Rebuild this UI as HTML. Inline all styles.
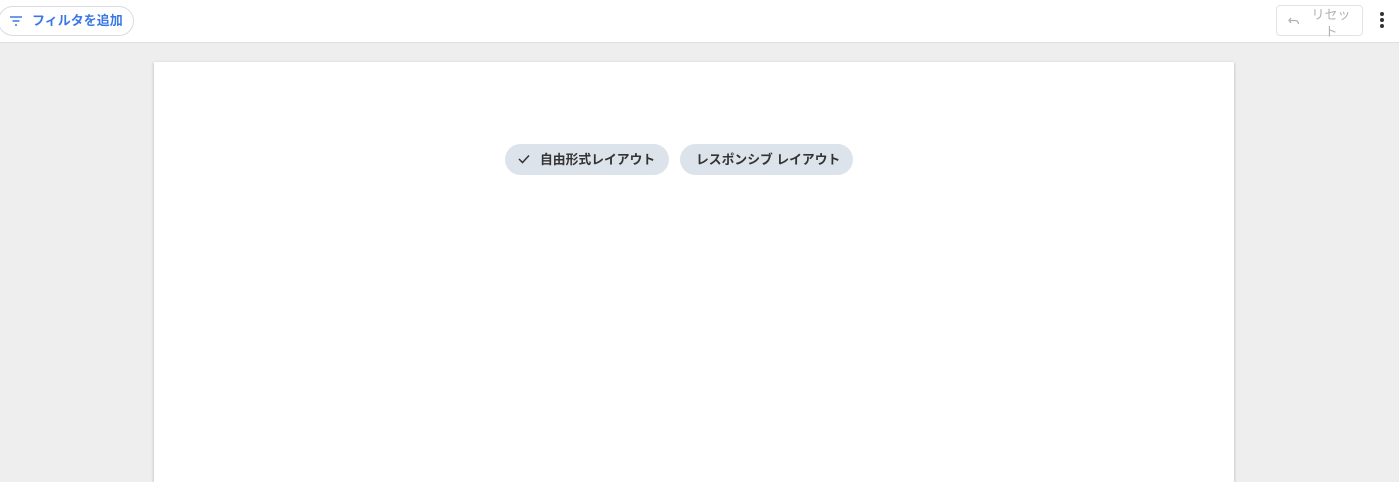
<!DOCTYPE html>
<html><head><meta charset="utf-8"><style>
body{margin:0;width:1399px;height:468px;overflow:hidden;background:#eeeeee;font-family:"Liberation Sans","Noto Sans CJK JP",sans-serif;position:relative}
.top{position:absolute;left:0;top:0;width:1399px;height:42px;background:#fff;border-bottom:1px solid #e0e0e0}
.filter{position:absolute;left:-2px;top:6px;width:136px;height:30px;border:1px solid #dadce0;border-radius:15px;box-sizing:border-box;color:#3b78e7;font-size:13px;font-weight:bold;line-height:28px}
.filter svg{position:absolute;left:10px;top:8px}
.filter span{position:absolute;left:33px;top:0}
.reset{position:absolute;left:1276px;top:5px;width:87px;height:31px;border:1px solid #e3e3e3;border-radius:4px;box-sizing:border-box;color:#b0b0b0;font-size:13px}
.reset .t{position:absolute;left:30px;top:0px;width:48px;line-height:17px;text-align:center}
.reset svg{position:absolute;left:11px;top:10px}
.dots{position:absolute;left:1380px;top:12px}
.dots i{display:block;width:4px;height:4px;border-radius:2px;background:#333;margin-bottom:2px}
.page{position:absolute;left:154px;top:62px;width:1080px;height:420px;background:#fff;box-shadow:0 1px 3px rgba(0,0,0,.25)}
.chip{position:absolute;top:144px;height:31px;border-radius:16px;background:#dde3ea;color:#333;font-size:12.8px;font-weight:bold;line-height:31px;box-sizing:border-box;white-space:nowrap}
</style></head><body>
<div class="top">
<div class="filter"><svg width="14" height="12" viewBox="0 0 14 12"><path d="M1 2h12M3.5 6h7M6 10h2" stroke="#3b78e7" stroke-width="1.6"/></svg><span>フィルタを追加</span></div>
<div class="reset"><svg width="12" height="10" viewBox="0 0 12 10"><path d="M3 2L1 4.5 3 7M1 4.5h6a3.5 3.5 0 0 1 3.5 3.5" stroke="#b0b0b0" stroke-width="1.3" fill="none"/></svg><div class="t">リセット</div></div>
<div class="dots"><i></i><i></i><i></i></div>
</div>
<div class="page"></div>
<div class="chip" style="left:505px;width:164px;padding-left:35px"><svg style="position:absolute;left:13px;top:10px" width="12" height="10" viewBox="0 0 12 10"><path d="M1 5l3.5 3.5L11 1.5" stroke="#333" stroke-width="1.5" fill="none"/></svg>自由形式レイアウト</div>
<div class="chip" style="left:680px;width:173px;padding-left:16px">レスポンシブ レイアウト</div>
</body></html>
